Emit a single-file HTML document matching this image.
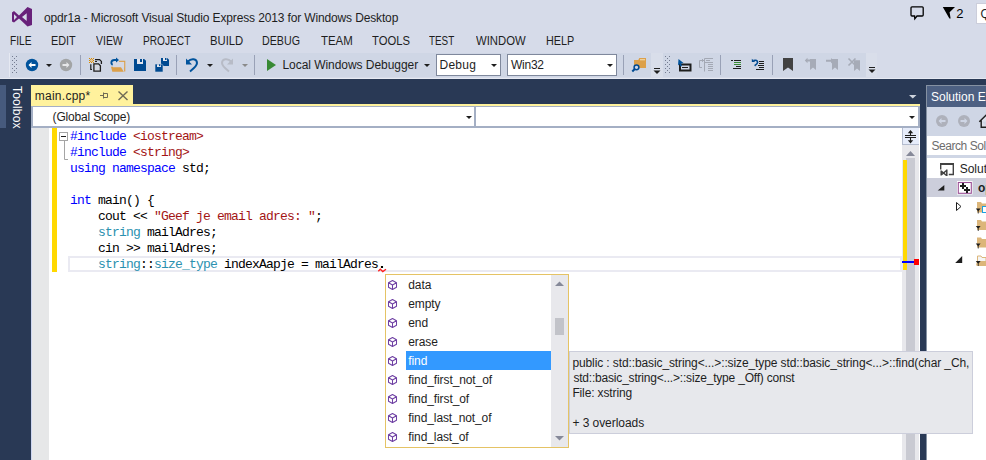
<!DOCTYPE html>
<html><head><meta charset="utf-8">
<style>
*{margin:0;padding:0;box-sizing:border-box}
html,body{width:986px;height:460px;overflow:hidden;background:#D6DBE9;font-family:"Liberation Sans",sans-serif;font-size:12px;color:#1E1E1E;position:relative}
.a{position:absolute}
.t{position:absolute;white-space:pre;line-height:14px}
.menu{top:34px}
.code{position:absolute;font-family:"Liberation Mono",monospace;font-size:13px;letter-spacing:-0.8px;line-height:16px;white-space:pre;color:#000}
.kw{color:#0000FF}.inc{color:#A31515}.ty{color:#2B91AF}
.cl{position:absolute;left:408.3px;letter-spacing:-0.1px;white-space:pre;line-height:14px}
.tip{position:absolute;left:573px;white-space:pre;line-height:14px}
svg{position:absolute;left:0;top:0}
</style></head><body>
<!-- ===== chrome backgrounds ===== -->
<div class="a" style="left:9px;top:53px;width:1px;height:24px;background:#E6E9F2"></div>
<div class="a" style="left:10px;top:53px;width:641px;height:24px;background:#CFD6E5"></div>
<div class="a" style="left:651px;top:53px;width:12px;height:24px;background:#D9DEEA"></div>
<div class="a" style="left:663px;top:53px;width:203px;height:24px;background:#CFD6E5"></div>
<div class="a" style="left:866px;top:53px;width:11px;height:24px;background:#D9DEEA"></div>
<div class="a" style="left:0;top:78px;width:986px;height:1px;background:#E6E9F2"></div>

<!-- navy -->
<div class="a" style="left:0;top:79px;width:986px;height:381px;background:#293955"></div>
<div class="a" style="left:0;top:85px;width:6px;height:43px;background:#465A7D"></div>
<div class="a" style="left:8.7px;top:85.6px;width:16px;height:46px;writing-mode:vertical-rl;color:#fff;line-height:16px;font-size:12px;letter-spacing:0.2px">Toolbox</div>

<!-- title -->
<div class="t" style="left:44px;top:11px;letter-spacing:-0.14px">opdr1a - Microsoft Visual Studio Express 2013 for Windows Desktop</div>
<div class="t" style="left:956.3px;top:7px;font-size:13px;color:#000">2</div>
<div class="a" style="left:976px;top:3px;width:14px;height:21px;background:#fff;border:1px solid #CCCEDB"></div>
<div class="t" style="left:980.5px;top:7px;color:#1E1E1E">Q</div>

<!-- menu -->
<div class="t menu" style="left:10.15px;transform:scaleX(0.854);transform-origin:0 0">FILE</div>
<div class="t menu" style="left:51.1px;transform:scaleX(0.904);transform-origin:0 0">EDIT</div>
<div class="t menu" style="left:96px;transform:scaleX(0.871);transform-origin:0 0">VIEW</div>
<div class="t menu" style="left:142.65px;transform:scaleX(0.845);transform-origin:0 0">PROJECT</div>
<div class="t menu" style="left:210.06px;transform:scaleX(0.941);transform-origin:0 0">BUILD</div>
<div class="t menu" style="left:262.11px;transform:scaleX(0.89);transform-origin:0 0">DEBUG</div>
<div class="t menu" style="left:320.5px;transform:scaleX(0.953);transform-origin:0 0">TEAM</div>
<div class="t menu" style="left:372px;transform:scaleX(0.938);transform-origin:0 0">TOOLS</div>
<div class="t menu" style="left:429px;transform:scaleX(0.823);transform-origin:0 0">TEST</div>
<div class="t menu" style="left:475.5px;transform:scaleX(0.943);transform-origin:0 0">WINDOW</div>
<div class="t menu" style="left:545.6px;transform:scaleX(0.9);transform-origin:0 0">HELP</div>

<!-- toolbar text & combos -->
<div class="t" style="left:282.5px;top:58px;letter-spacing:-0.05px">Local Windows Debugger</div>
<div class="a" style="left:436px;top:54px;width:65px;height:22px;background:#fff;border:1px solid #7F889C"></div>
<div class="t" style="left:439.5px;top:58px;letter-spacing:0.25px">Debug</div>
<div class="a" style="left:507px;top:54px;width:110px;height:22px;background:#fff;border:1px solid #7F889C"></div>
<div class="t" style="left:511px;top:58px;letter-spacing:-0.25px">Win32</div>

<!-- editor tab -->
<div class="a" style="left:31px;top:85px;width:102px;height:21px;background:#FFF29D"></div>
<div class="t" style="left:34.7px;top:89px;letter-spacing:0.27px">main.cpp*</div>
<div class="a" style="left:31px;top:104px;width:889px;height:2px;background:#FFF29D"></div>

<!-- nav bar -->
<div class="a" style="left:31px;top:106px;width:889px;height:22px;background:#A4AFC4"></div>
<div class="a" style="left:33px;top:107px;width:441px;height:19px;background:#fff"></div>
<div class="a" style="left:476px;top:107px;width:442px;height:19px;background:#fff"></div>
<div class="t" style="left:52.6px;top:110px;letter-spacing:-0.18px">(Global Scope)</div>

<!-- editor -->
<div class="a" style="left:31px;top:128px;width:889px;height:332px;background:#fff"></div>
<div class="a" style="left:31px;top:128px;width:1px;height:332px;background:#CCD5F0"></div>
<div class="a" style="left:32px;top:128px;width:17px;height:332px;background:#E6E7E8"></div>
<div class="a" style="left:52px;top:128px;width:5px;height:144px;background:#FFD800"></div>
<div class="a" style="left:68px;top:256px;width:834px;height:16px;border:2px solid #EAEAF2"></div>
<!-- scrollbar -->
<div class="a" style="left:902px;top:128px;width:17px;height:332px;background:#E8E8EC"></div>
<div class="a" style="left:906px;top:158px;width:9px;height:302px;background:#C9CAD2"></div>
<div class="a" style="left:902px;top:128px;width:17px;height:17px;background:#E6ECFA;border-left:1px solid #B4BCCE;border-bottom:1px solid #B4BCCE"></div>
<div class="a" style="left:903px;top:160px;width:4px;height:110px;background:#FFD800"></div>
<div class="a" style="left:902px;top:261px;width:12px;height:2px;background:#0000FF"></div>
<div class="a" style="left:914px;top:259px;width:5px;height:6px;background:#FF0000"></div>

<div class="code" style="left:70px;top:129px"><span class="kw">#include</span> <span class="inc">&lt;iostream&gt;</span>
<span class="kw">#include</span> <span class="inc">&lt;string&gt;</span>
<span class="kw">using</span> <span class="kw">namespace</span> std;

<span class="kw">int</span> main() {
    cout &lt;&lt; <span class="inc">"Geef je email adres: "</span>;
    <span class="ty">string</span> mailAdres;
    cin &gt;&gt; mailAdres;
    <span class="ty">string</span>::<span class="ty">size_type</span> indexAapje = mailAdres.</div>

<!-- chrome icons svg -->
<svg width="986" height="460" viewBox="0 0 986 460">
 <!-- VS logo -->
 <path d="M27.5 7 L32 9 V25 L27.5 26.6 L19 18.6 L14 22.6 L12 21.6 V12.4 L14 11 L19 15.4 Z M26.7 13.2 L22 17 L26.7 21 Z M14 14.2 V20 L17 17.1 Z" fill="#68217A" fill-rule="evenodd"/>
 <!-- feedback bubble -->
 <path d="M912 6.8 H922.2 Q923.2 6.8 923.2 7.8 V15 Q923.2 16 922.2 16 H917 L914.8 18.8 L914.6 16 H912 Q911 16 911 15 V7.8 Q911 6.8 912 6.8 Z" fill="none" stroke="#000" stroke-width="1.3"/>
 <!-- notification flag -->
 <path d="M942.8 7 H955 L949.6 12.2 L950.6 18.6 L949.4 18.6 Z" fill="#000"/>
 <!-- grip 1 -->
 <g fill="#737B90">
  <rect x="12" y="56" width="1" height="1"/><rect x="16" y="56" width="1" height="1"/><rect x="14" y="58" width="1" height="1"/>
  <rect x="12" y="60" width="1" height="1"/><rect x="16" y="60" width="1" height="1"/><rect x="14" y="62" width="1" height="1"/>
  <rect x="12" y="64" width="1" height="1"/><rect x="16" y="64" width="1" height="1"/><rect x="14" y="66" width="1" height="1"/>
  <rect x="12" y="68" width="1" height="1"/><rect x="16" y="68" width="1" height="1"/><rect x="14" y="70" width="1" height="1"/>
  <rect x="12" y="72" width="1" height="1"/><rect x="16" y="72" width="1" height="1"/>
  <rect x="665" y="56" width="1" height="1"/><rect x="669" y="56" width="1" height="1"/><rect x="667" y="58" width="1" height="1"/>
  <rect x="665" y="60" width="1" height="1"/><rect x="669" y="60" width="1" height="1"/><rect x="667" y="62" width="1" height="1"/>
  <rect x="665" y="64" width="1" height="1"/><rect x="669" y="64" width="1" height="1"/><rect x="667" y="66" width="1" height="1"/>
  <rect x="665" y="68" width="1" height="1"/><rect x="669" y="68" width="1" height="1"/><rect x="667" y="70" width="1" height="1"/>
  <rect x="665" y="72" width="1" height="1"/><rect x="669" y="72" width="1" height="1"/>
 </g>
 <!-- back / forward -->
 <circle cx="32" cy="65" r="6.2" fill="#00539C"/>
 <path d="M28.5 65 L31.5 62 V64 H35.5 V66 H31.5 V68 Z" fill="#fff"/>
 <path d="M46 64 H52 L49 67 Z" fill="#1E1E1E"/>
 <circle cx="66" cy="65" r="6.2" fill="#A2A4A5"/>
 <path d="M69.5 65 L66.5 62 V64 H62.5 V66 H66.5 V68 Z" fill="#E6E7E8"/>
 <!-- separators -->
 <g fill="#99A1B6">
  <rect x="80" y="55" width="1" height="20"/><rect x="176" y="55" width="1" height="20"/><rect x="254" y="55" width="1" height="20"/>
  <rect x="623" y="55" width="1" height="20"/><rect x="720" y="55" width="1" height="20"/><rect x="772" y="55" width="1" height="20"/>
 </g>
 <!-- new project -->
 <g fill="#D98A00"><rect x="89" y="58" width="1" height="1"/><rect x="89" y="60" width="1" height="1"/><rect x="89" y="62" width="1" height="1"/><rect x="90" y="59" width="1" height="1"/><rect x="90" y="61" width="1" height="1"/><rect x="91" y="58" width="1" height="1"/><rect x="91" y="62" width="1" height="1"/><rect x="92" y="59" width="1" height="1"/><rect x="92" y="61" width="1" height="1"/><rect x="93" y="58" width="1" height="1"/><rect x="93" y="60" width="1" height="1"/><rect x="93" y="62" width="1" height="1"/><rect x="90" y="59" width="3" height="3" fill="#E6B05A" opacity="0.5"/></g>
 <path d="M95 59.6 H99.6 L101.4 61.4 V64" fill="none" stroke="#1E1E1E" stroke-width="1.3"/>
 <rect x="95" y="61" width="2" height="1" fill="#1E1E1E"/>
 <path d="M93.9 63.9 H98.6 L100.4 65.7 V71.2 H93.9 Z" fill="#D5D8E2" stroke="#1E1E1E" stroke-width="1.3"/>
 <path d="M90.8 64.2 V69.5 H92" fill="none" stroke="#1E1E1E" stroke-width="1.2"/>
 <!-- open -->
 <path d="M119 61.3 H124.7 V71.5" fill="none" stroke="#DCA04A" stroke-width="1.2"/>
 <rect x="113" y="61.9" width="11.1" height="5.5" fill="#D5D9E5"/>
 <path d="M111 66.8 H113 V67.2 H121 L123.8 71.8 H112.3 Z" fill="#DCA04A"/>
 <path d="M112.6 64.8 C110.6 63.8 110.8 60.2 114.2 60 H116.5" fill="none" stroke="#00539C" stroke-width="1.9"/>
 <path d="M116 57.4 L119 60 L116 62.6 Z" fill="#00539C"/>
 <!-- save -->
 <path d="M134 59 H144.2 L146 60.8 V71 H134 Z" fill="#004A91"/>
 <rect x="137" y="59" width="6" height="5" fill="#E4E6EE"/><rect x="140" y="59" width="2" height="3" fill="#004A91"/>
 <!-- save all -->
 <path d="M161 58 H167.2 L169 59.8 V66 H161 Z" fill="#004A91"/>
 <rect x="163" y="58" width="4" height="3" fill="#E4E6EE"/><rect x="165" y="58" width="1.5" height="2" fill="#004A91"/>
 <path d="M155 64 H161.5 L163 65.5 V72 H155 Z" fill="#004A91" stroke="#CFD6E5" stroke-width="0.6"/>
 <rect x="157" y="64.3" width="4" height="2.7" fill="#E4E6EE"/><rect x="159" y="64.3" width="1.3" height="1.8" fill="#004A91"/>
 <!-- undo -->
 <path d="M188 61.5 C191 58 197 58.5 197 63 C197 66 193 69 190 71.5" fill="none" stroke="#00539C" stroke-width="2"/>
 <path d="M186 58.5 V64.5 H192 Z" fill="#00539C"/>
 <path d="M207 64 H213 L210 67 Z" fill="#1E1E1E"/>
 <!-- redo (disabled) -->
 <path d="M231 61.5 C228 58 222 58.5 222 63 C222 66 226 69 229 71.5" fill="none" stroke="#B7BBC6" stroke-width="2"/>
 <path d="M233 58.5 V64.5 H227 Z" fill="#B7BBC6"/>
 <path d="M242 64 H248 L245 67 Z" fill="#8A8A8A"/>
 <!-- play -->
 <path d="M267 59 L276 65 L267 71 Z" fill="#388A34"/>
 <path d="M424 64 H430 L427 67 Z" fill="#1E1E1E"/>
 <path d="M491 64 H497 L494 67 Z" fill="#1E1E1E"/>
 <path d="M607 64 H613 L610 67 Z" fill="#1E1E1E"/>
 <!-- find in files -->
 <path d="M634 60 H638.3 L639.3 58 H646 V68 H634 Z" fill="#DCA04A"/>
 <rect x="640" y="59.2" width="5" height="1.1" fill="#F3DDB0"/>
 <circle cx="636.5" cy="67.3" r="2.4" fill="#CFD6E5" stroke="#004A91" stroke-width="1.5"/>
 <path d="M634.8 69 L632.3 71.5" stroke="#004A91" stroke-width="2"/>
 <!-- overflow 1 -->
 <rect x="654" y="68" width="6" height="1" fill="#1E1E1E"/><path d="M653.5 70.5 H660.5 L657 74 Z" fill="#1E1E1E"/>
 <rect x="869" y="67" width="6" height="1" fill="#1E1E1E"/><path d="M868.5 69.5 H875.5 L872 73 Z" fill="#1E1E1E"/>
 <!-- toolbar 2 icons -->
 <rect x="680" y="64.5" width="10.5" height="6" fill="none" stroke="#1E1E1E" stroke-width="2"/>
 <rect x="682" y="67" width="6" height="1" fill="#1E1E1E"/>
 <path d="M678.5 59 L683.5 63 L681 63.5 L682 66 L680.5 66.5 L679.5 64 L678 65.5 Z" fill="#00539C"/>
 <g fill="none" stroke="#A3A8B4" stroke-width="1">
  <path d="M704.5 58.5 V71.5 M704.5 58.5 H713 M704.5 62.5 H713 M706 60.5 H710 M708 64.5 H713 M708 66.5 H713 M708 68.5 H713 M708 70.5 H713 M699.5 60.5 V67.5 H702 M699.5 60.5 H704.5 M702.5 59 V61.8"/>
 </g>
 <g fill="#1E1E1E">
  <rect x="731" y="60" width="2" height="1"/><rect x="734" y="60" width="7" height="1"/>
  <rect x="736" y="66" width="5" height="1"/><rect x="733" y="68" width="8" height="1"/>
 </g>
 <g fill="#388A34"><rect x="734" y="62" width="7" height="1"/><rect x="734" y="64" width="7" height="1"/></g>
 <g fill="#1E1E1E">
  <rect x="759" y="61" width="5" height="1"/><rect x="759" y="63" width="5" height="1"/><rect x="758" y="65" width="6" height="1"/>
  <rect x="759" y="67" width="5" height="1"/><rect x="756" y="69" width="8" height="1"/>
 </g>
 <path d="M753.5 60.6 C756 59.6 757.6 60.6 757.6 62.2 C757.6 63.8 756.2 64.8 754.6 65.8" fill="none" stroke="#004A91" stroke-width="1.6"/>
 <path d="M751.8 58.8 V62 H755.2 Z" fill="#004A91"/>
 <!-- bookmarks -->
 <path d="M783 58 H793 V71 L788 67.5 L783 71 Z" fill="#424242"/>
 <g fill="#A6ABB7" stroke="none">
  <path d="M810 59 H816 V70 L813 67.5 L810 70 Z"/>
  <path d="M804.8 60.5 L807.5 57.8 V59.5 H812 V61.5 H807.5 V63.2 Z"/>
  <path d="M832 59 H838 V70 L835 67.5 L832 70 Z"/>
  <path d="M833.8 60.8 L831 58 V59.8 H826 V61.8 H831 V63.6 Z"/>
  <path d="M854 60.2 H860 V71 L857 68.5 L854 71 Z"/>
 </g>
 <path d="M848.5 58.5 L855.5 65.5 M855.5 58.5 L848.5 65.5" stroke="#A6ABB7" stroke-width="1.6"/>
 <!-- tab pin & close -->
 <path d="M100 95.5 H103 M103.5 92.5 V98.5 M103.5 93.5 H107.5 V97.5 H103.5" fill="none" stroke="#6F6B55" stroke-width="1"/>
 <path d="M118.5 91.5 L127.5 100 M127.5 91.5 L118.5 100" stroke="#6F6B55" stroke-width="1.4"/>
 <!-- doc well dropdown -->
 <path d="M909 95 H916.5 L912.75 98.5 Z" fill="#CED4DD"/>
 <!-- nav dropdown arrows -->
 <path d="M466 116 H472 L469 119 Z" fill="#1E1E1E"/>
 <path d="M909 116 H915 L912 119 Z" fill="#1E1E1E"/>
 <!-- fold -->
 <rect x="59.5" y="132.5" width="8" height="8" fill="#fff" stroke="#A5A5A5" stroke-width="1"/>
 <rect x="61" y="136" width="5" height="1" fill="#1E1E1E"/>
 <path d="M64.5 141 V159.5 H68" fill="none" stroke="#A5A5A5" stroke-width="1"/>
 <!-- splitter -->
 <path d="M905 135.5 H916 M905 137.5 H916" stroke="#1E1E1E" stroke-width="1"/>
 <path d="M910.5 131.5 V135 M910.5 138 V141.5" fill="none" stroke="#1E1E1E" stroke-width="1.1"/><path d="M907.8 133.2 L910.5 130 L913.2 133.2 Z M907.8 140.3 L910.5 143.5 L913.2 140.3 Z" fill="#1E1E1E"/>
 <path d="M906 156 H915 L910.5 151 Z" fill="#868999"/>
 <!-- squiggle -->
 <rect x="381" y="266" width="2" height="2" fill="#000"/>
 <path d="M378.3 271.3 L380.3 269.3 L382.8 271.5 L386 269.2" fill="none" stroke="#FF2020" stroke-width="1.4"/>
</svg>

<!-- ===== solution explorer ===== -->
<div class="a" style="left:926px;top:85px;width:60px;height:375px;background:#fff;border-left:1px solid #8591A2;border-top:1px solid #8591A2"></div>
<div class="a" style="left:927px;top:86px;width:59px;height:21px;background:#4D6082"></div>
<div class="t" style="left:931px;top:90px;color:#fff">Solution Explorer</div>
<div class="a" style="left:927px;top:107px;width:59px;height:51px;background:#CFD6E5"></div>
<div class="a" style="left:927px;top:136px;width:59px;height:19px;background:#fff"></div>
<div class="t" style="left:931.5px;top:139px;color:#6D6D6D;letter-spacing:-0.45px">Search Solution Explorer</div>
<div class="t" style="left:959.7px;top:162px">Solution</div>
<div class="a" style="left:927px;top:178px;width:59px;height:19px;background:#CCCEDB"></div>
<div class="t" style="left:978px;top:181px;font-weight:bold">opdr1a</div>
<svg width="986" height="460" viewBox="0 0 986 460">
 <circle cx="942" cy="121" r="6" fill="#AEB1BB"/><path d="M938.5 121 L941.5 118 V120 H945.5 V122 H941.5 V124 Z" fill="#CFD6E5"/>
 <circle cx="964" cy="121" r="6" fill="#AEB1BB"/><path d="M967.5 121 L964.5 118 V120 H960.5 V122 H964.5 V124 Z" fill="#CFD6E5"/>
 <path d="M981.2 120.5 V127.3 H987 M979.3 121.8 L986.5 114.8 L993 121" fill="#DDE0EA" stroke="#1E1E1E" stroke-width="1.4"/>
 <!-- solution icon -->
 <rect x="940" y="163" width="14" height="2" fill="#424242"/>
 <path d="M940.7 165 V169.5 M953.3 165 V174.5 H948.8" fill="none" stroke="#424242" stroke-width="1.4"/>
 <path d="M941.2 170.5 V175.5 M941.2 171 L946.5 175.5 M941.2 175 L946.5 170.5 M946.8 169.5 V176" fill="none" stroke="#424242" stroke-width="1.5"/>
 <!-- expanded triangle -->
 <path d="M944.3 185 V190.6 H937.7 Z" fill="#1E1E1E"/>
 <rect x="957" y="181" width="15.5" height="13.5" fill="#fff"/>
 <rect x="958.3" y="182.5" width="13" height="10.8" fill="#fff" stroke="#9B4F96" stroke-width="1.1"/>
 <g fill="#1E1E1E"><rect x="960" y="185" width="6" height="2"/><rect x="962" y="183" width="2" height="6"/><rect x="964" y="189" width="6" height="2"/><rect x="966" y="187" width="2" height="6"/></g>
 <path d="M956.5 202.5 V210.5 L961 206.5 Z" fill="none" stroke="#1E1E1E" stroke-width="1"/>
 <path d="M962.2 256 V263 H955.2 Z" fill="#1E1E1E"/>
 <g fill="#DCB67A">
  <path d="M977 202 H981 L982 203.5 H986 V212.5 H977 Z"/>
  <path d="M977 220 H981 L982 221.5 H986 V230 H977 Z"/>
  <path d="M977 237.5 H981 L982 239 H986 V247.5 H977 Z"/>
 </g>
 <path d="M977.5 256 H981 L982 257.5 H986 V265.5 H977.5 Z" fill="#F5F5F5" stroke="#DCB67A" stroke-width="1"/>
 <path d="M977 261 H986 V265.5 H976 Z" fill="#DCB67A"/>
 <g fill="#1E1E1E">
  <path d="M975.8 208.6 H980.6 L978.6 211 V213.5 H977.8 V211 Z"/>
  <path d="M975.8 226.1 H980.6 L978.6 228.5 V231 H977.8 V228.5 Z"/>
  <path d="M975.8 243.6 H980.6 L978.6 246 V248.5 H977.8 V246 Z"/>
  <path d="M975.8 261.1 H980.6 L978.6 263.5 V266 H977.8 V263.5 Z"/>
 </g>
 <rect x="982.5" y="206.5" width="5" height="6" fill="#fff" stroke="#1BA1E2" stroke-width="1"/>
</svg>

<!-- ===== completion list ===== -->
<div class="a" style="left:385px;top:274px;width:184px;height:174px;background:#fff;border:1px solid #E5C365"></div>
<div class="a" style="left:551px;top:275px;width:17px;height:172px;background:#E8E8EC"></div>
<div class="a" style="left:555px;top:318px;width:9px;height:17px;background:#C2C3C9"></div>
<div class="a" style="left:406px;top:351px;width:145px;height:19px;background:#3399FF"></div>
<div class="cl" style="top:278px">data</div>
<div class="cl" style="top:297px">empty</div>
<div class="cl" style="top:316px">end</div>
<div class="cl" style="top:335px">erase</div>
<div class="cl" style="top:354px;color:#fff">find</div>
<div class="cl" style="top:373px">find_first_not_of</div>
<div class="cl" style="top:392px">find_first_of</div>
<div class="cl" style="top:411px">find_last_not_of</div>
<div class="cl" style="top:430px">find_last_of</div>
<svg width="986" height="460" viewBox="0 0 986 460">
 <defs><g id="cube"><path d="M0 -4.5 L4 -2.3 V2.3 L0 4.5 L-4 2.3 V-2.3 Z M-4 -2.3 L0 0 L4 -2.3 M0 0 V4.5" fill="none" stroke="#6E3FA3" stroke-width="1.05" stroke-linejoin="round"/></g></defs>
 <use href="#cube" x="392.5" y="285"/><use href="#cube" x="392.5" y="304"/><use href="#cube" x="392.5" y="323"/>
 <use href="#cube" x="392.5" y="342"/><use href="#cube" x="392.5" y="361"/><use href="#cube" x="392.5" y="380"/>
 <use href="#cube" x="392.5" y="399"/><use href="#cube" x="392.5" y="418"/><use href="#cube" x="392.5" y="437"/>
 <path d="M555 286 H564 L559.5 281.5 Z" fill="#868999"/>
 <path d="M555 436 H564 L559.5 440.5 Z" fill="#868999"/>
</svg>

<!-- ===== tooltip ===== -->
<div class="a" style="left:569px;top:351px;width:404px;height:83px;background:#E7E8EC;border:1px solid #CCCEDB"></div>
<div class="tip" style="top:356px;left:572.4px;letter-spacing:-0.107px">public : std::basic_string&lt;...&gt;::size_type std::basic_string&lt;...&gt;::find(char _Ch,</div>
<div class="tip" style="top:371px;left:573.4px;letter-spacing:-0.195px">std::basic_string&lt;...&gt;::size_type _Off) const</div>
<div class="tip" style="top:386px;left:572.4px;letter-spacing:-0.133px">File: xstring</div>
<div class="tip" style="top:416px;left:572.4px;letter-spacing:-0.05px">+ 3 overloads</div>
</body></html>
